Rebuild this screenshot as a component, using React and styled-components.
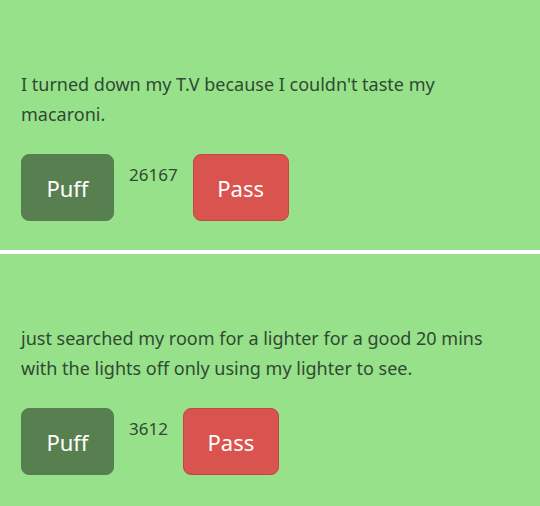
import React from 'react'
import styled, { createGlobalStyle } from 'styled-components'

const GlobalStyle = createGlobalStyle`
  html, body {
    margin: 0;
    padding: 0;
    background: #98e18b;
  }
  body {
    font-family: "Noto Sans", "Open Sans", sans-serif;
  }
`

const posts = [
  { text: "I turned down my T.V because I couldn't taste my macaroni.", count: 26167 },
  { text: 'just searched my room for a lighter for a good 20 mins with the lights off only using my lighter to see.', count: 3612 },
]

export default function App() {
  return (
    <>
      <GlobalStyle />
      <Feed>
        {posts.map((p, i) => (
          <Card key={i}>
            <Text>{p.text}</Text>
            <Actions>
              <Button variant="puff">Puff</Button>
              <Count>{p.count}</Count>
              <Button variant="pass">Pass</Button>
            </Actions>
          </Card>
        ))}
      </Feed>
    </>
  )
}

const Feed = styled.div`
  display: flex;
  flex-direction: column;
  gap: 4px;
  background: #ffffff;
`

const Card = styled.div`
  background: #98e18b;
  height: 250px;
  box-sizing: border-box;
  padding: 69px 21px 0 21px;
`

const Text = styled.p`
  margin: 0;
  width: 470px;
  font-size: 18px;
  line-height: 30px;
  color: #2f4a31;
`

const Actions = styled.div`
  display: flex;
  align-items: flex-start;
  margin-top: 25px;
`

const Button = styled.button`
  height: 67px;
  padding: 0;
  width: ${({ variant }) => (variant === 'puff' ? '93px' : '96px')};
  border-radius: 8px;
  border: 1px solid ${({ variant }) => (variant === 'puff' ? '#567f4f' : '#c9443f')};
  background: ${({ variant }) => (variant === 'puff' ? '#577f50' : '#d9534f')};
  color: #ffffff;
  font-family: inherit;
  font-size: 22px;
  cursor: pointer;
`

const Count = styled.span`
  padding: 9px 15px 0 15px;
  font-size: 17px;
  line-height: 24px;
  color: #2f4a31;
`
